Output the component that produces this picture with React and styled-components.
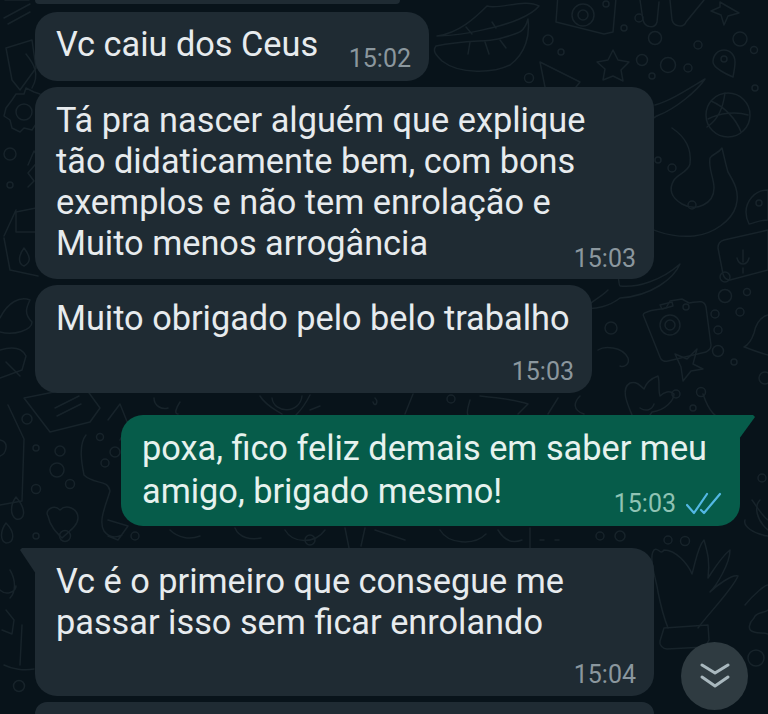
import React from 'react';
import styled, {createGlobalStyle} from 'styled-components';

const GlobalStyle = createGlobalStyle`
  html, body {
    margin: 0;
    padding: 0;
    background: #08131a;
  }
`

const Screen = styled.div`
  position: relative;
  width: 768px;
  height: 714px;
  overflow: hidden;
  background: #08131a;
  font-family: Roboto, "Liberation Sans", sans-serif;
`

const WallpaperSvg = styled.svg`
  position: absolute;
  top: 0;
  left: 0;
  fill: none;
  stroke: #17232a;
  stroke-width: 1.5;
  stroke-linecap: round;
  stroke-linejoin: round;
`

const MessageList = styled.div`
  position: relative;
  display: flex;
  flex-direction: column;
  height: 714px;
  padding: 0 13px 0 35px;
  box-sizing: border-box;
`

const Bubble = styled.div`
  position: relative;
  flex: none;
  box-sizing: border-box;
  width: ${props => props.$width}px;
  height: ${props => props.$height}px;
  margin-top: ${props => props.$gap}px;
  margin-left: ${props => props.$indent || 0}px;
  padding: ${props => props.$top}px 18px 0 22px;
  background: ${props => props.$out ? '#065c4a' : '#1f2b33'};
  border-radius: 22px;
  ${props => props.$out && 'border-top-right-radius: 0;'}
  ${props => props.$tail && 'border-top-left-radius: 0;'}
  ${props => props.$sliver && 'border-top-left-radius: 0; border-top-right-radius: 0;'}
  ${props => props.$cut && 'border-bottom-left-radius: 0; border-bottom-right-radius: 0;'}
`

const TailOut = styled.span`
  position: absolute;
  top: 0;
  right: -15px;
  width: 16px;
  height: 24px;
  background: #065c4a;
  clip-path: polygon(0 0, 88% 0, 100% 8%, 0 100%);
`

const TailIn = styled.span`
  position: absolute;
  top: 0;
  left: -15px;
  width: 16px;
  height: 26px;
  background: #1f2b33;
  clip-path: polygon(100% 0, 12% 0, 0 8%, 100% 100%);
`

const Lines = styled.div`
  margin-left: -1px;
  color: ${props => props.$out ? '#e6f2ee' : '#e7ebee'};
  font-size: 34.3px;
  line-height: ${props => props.$lineHeight || 41}px;
  white-space: nowrap;
`

const InlineRow = styled.div`
  display: flex;
  align-items: flex-start;
  justify-content: space-between;
`

const Meta = styled.div`
  display: flex;
  align-items: center;
  justify-content: flex-end;
  gap: 10px;
  margin-top: ${props => props.$offset || 0}px;
  color: ${props => props.$out ? '#90c3b4' : '#8b979e'};
  font-size: 25px;
  line-height: 30px;
  white-space: nowrap;
`

const ScrollButton = styled.div`
  position: absolute;
  left: 681px;
  top: 642px;
  width: 67px;
  height: 68px;
  border-radius: 50%;
  background: #2f3b41;
  display: flex;
  align-items: center;
  justify-content: center;
`

const Wallpaper = () => (
    <WallpaperSvg width="768" height="714" viewBox="0 0 768 714">
        {/* top right dots */}
        <circle cx="655" cy="38" r="6.5"/><circle cx="642" cy="60" r="5.5"/><circle cx="668" cy="65" r="7.5"/>
        <circle cx="688" cy="68" r="4"/><circle cx="652" cy="76" r="3"/><circle cx="698" cy="45" r="4"/>
        <circle cx="740" cy="39" r="7"/><circle cx="754" cy="50" r="3.5"/><circle cx="755" cy="88" r="3"/>
        <circle cx="548" cy="40" r="5"/><circle cx="561" cy="52" r="3"/><circle cx="529" cy="78" r="4.5"/>
        <circle cx="639" cy="18" r="4"/><circle cx="624" cy="28" r="3"/>
        {/* pin */}
        <path d="M713 62c0-7 5-12 11-12s11 5 11 12c0 4-1 10-2 15-5-2-20-9-20-15z"/><circle cx="724" cy="59" r="3"/>
        {/* star top */}
        <path d="M613 50l5 10 11 2-8 8 2 11-10-5-10 4 2-11-8-7 11-2z"/>
        {/* sparkle top */}
        <path d="M720 2l5 3 14 8-11 3-4 9-3-10-10-4 9-4z"/>
        {/* camera top */}
        <path d="M558 -6l-2 28 48 12 9-2 3-34"/><circle cx="583" cy="15" r="11"/><circle cx="583" cy="15" r="5"/><circle cx="606" cy="4" r="3"/>
        {/* headphone shape */}
        <path d="M640 0l3 20c2 8 12 9 14 2l2-20M670 0l2 20c2 7 12 8 14 2l18-22"/>
        {/* lips */}
        <path d="M437 36c22-3 38-18 50-30 12 4 38-8 52 0 -8 10-30 18-48 22-14 3-24 7-54 8z"/>
        <path d="M436 46c30-6 50-4 62-7 22-6 26-6 30-20 2 16-2 34-18 46-16 8-50 10-68-4-6-6-10-10-6-15z"/>
        <path d="M466 27l6 7M492 22l4 6M470 42l-2 12M485 42l4 12M500 40l6 8"/>
        {/* triangle */}
        <path d="M540 62l40 20 -8 10 -26 0z"/>
        {/* basketball */}
        <circle cx="728" cy="115" r="22"/><path d="M711 101c14 6 25 18 30 31M725 93c-2 14-6 26-18 34M708 119c12-6 28-8 40-4"/>
        {/* snake */}
        <path d="M655 105c15-4 30-14 50-26-8 12-30 30-46 36-8 3-12 10-10 17M672 128c12 8 20 20 18 36-2 8-12 10-16 16-6 10-2 18 8 24 14 8 32 0 32-16 0-10-6-20-4-30 2-4 8-4 12-10 2 8 4 18 6 24 6 10 12 20 8 34-4 14-22 28-42 30-22 2-42-4-62-18"/>
        <path d="M610 256c10 10 8 30 10 30 18 2 42-6 60-22-6 14-28 32-60 34-10 8-26 12-34 10 4-6 14-10 22-18"/>
        <circle cx="658" cy="160" r="3"/><circle cx="672" cy="168" r="4"/><circle cx="692" cy="205" r="4"/>
        {/* pin right, mic card */}
        <path d="M746 212c0-10 8-22 22-22v30c-8 0-14 3-19 4-2-4-3-8-3-12z"/><circle cx="759" cy="203" r="3"/>
        <path d="M724 240l44-10v40l-38 10c-4 0-6-2-7-6l-5-26c0-4 2-7 6-8z"/>
        <path d="M743 250v12M737 258c2 8 10 8 12 0M743 268v5"/>
        {/* camera mid */}
        <path d="M647 312c6-3 12-2 19-4l4-7 12 -2 7 4c8-1 15-4 17 4l5 38c0 4-2 5-5 7l-38 9c-4 1-7-1-8-4l-16-40c-2-3 0-4 3-5z"/>
        <circle cx="670" cy="325" r="10"/><circle cx="670" cy="325" r="5"/><circle cx="686" cy="307" r="3"/><path d="M660 305l12-3 1 4-11 3z"/>
        {/* sparkle mid */}
        <path d="M675 354l12 5 10-10-4 15 10 5-12 2-8 10 -2-14z"/>
        {/* leaf */}
        <path d="M632 415c-4-10-12-26-2-32 6-2 10 2 14 6 2-6 6-10 14-13 2 6 0 14 2 20 4-4 10-6 14-2 0 6-8 16-22 18l-8 12"/>
        <circle cx="676" cy="394" r="4"/><circle cx="701" cy="392" r="4.5"/><circle cx="693" cy="408" r="3"/>
        <circle cx="725" cy="277" r="5"/><circle cx="725" cy="296" r="6.5"/><circle cx="747" cy="292" r="3.5"/>
        <circle cx="715" cy="314" r="4"/><circle cx="740" cy="312" r="4"/><circle cx="718" cy="330" r="4"/><circle cx="718" cy="351" r="5.5"/><circle cx="734" cy="362" r="3"/>
        {/* bell right */}
        <path d="M768 315c-8 2-12 8-14 18-2 6-6 12-10 14 6 2 16 6 24 8"/>
        <circle cx="765" cy="378" r="6"/>
        {/* person */}
        <circle cx="611" cy="328" r="6"/><path d="M598 350c6-4 24-4 30 8 2 6-4 10-8 8"/>
        {/* hand */}
        <path d="M668 628c-4-10-8-26-10-36-2-14-10-34-4-42 4-4 6 6 10 0 12 0 24 14 28 24 4-14 6-28 12-34 4 14 6 22 4 38 8-12 14-22 22-28 0 14-14 36-20 42 6-6 22-18 28-16-6 14-30 38-40 52"/>
        <path d="M664 628l44-3 1 15-4 7-38 2c-4 0-8-4-7-8z"/>
        <path d="M745 605c10-12 20-20 23-20M768 610c-6 4-12 2-14 8-4 4-8 12 0 14 6 2 8 0 14 2"/>
        <circle cx="756" cy="658" r="8"/>
        <circle cx="668" cy="540" r="4"/><circle cx="685" cy="541" r="4.5"/>
        <path d="M760 500c-6 6-4 20 8 30"/><circle cx="762" cy="478" r="4"/>
        <path d="M654 404c-2 6-8 8-14 4M703 394c6 18 14 26 20 22"/>
        {/* left column */}
        <path d="M5 0l24 0M4 18l26-14M8 24l22-12"/>
        <path d="M6 48l26-8 4 28 -16 22-8-10z"/><path d="M26 54c8 10 14 20 6 34"/>
        <path d="M12 100l4-6 8 0 2-6 8 4 6 2 2 8 8 2-2 8-6 2 0 8-6 2-4 6-8-2-4 4-8-4-2-8-6-4 2-8z"/><circle cx="24" cy="112" r="8"/>
        <circle cx="10" cy="154" r="6"/><circle cx="10" cy="185" r="3"/>
        <path d="M28 165l6-14 6 8 -12 14 6 8 -6 6"/>
        <path d="M16 212l20-4 0 24-20 0z M4 236l12-26M4 238l6 32 28 6"/>
        <path d="M24 248c6 8 8 14 0 18-6-2-6-10 0-18z"/>
        <path d="M0 318c8-16 20-22 30-18-4 8-6 14 2 22 0 8-18 14-32 10"/>
        <path d="M0 350c14-4 22-2 26 6l-4 14-22 8M6 362l14 14"/>
        <path d="M24 398l20-4 40 -8 16 22 -10 14 -40 10z"/><path d="M55 408l24-12M57 416l24-12"/>
        <path d="M8 405l16 34 -2 62 -22 4M0 440c10 2 6 14 0 16"/>
        <circle cx="27" cy="419" r="5"/><circle cx="36" cy="448" r="3"/><circle cx="60" cy="451" r="5"/><circle cx="57" cy="470" r="7"/>
        <circle cx="36" cy="489" r="4.5"/><circle cx="70" cy="484" r="4.5"/><circle cx="36" cy="536" r="3"/><circle cx="65" cy="536" r="5.5"/>
        <path d="M16 497c-6 8-6 18 0 22 8 2 12-8-0-22z"/>
        <path d="M6 523c-6 8-6 18 0 20 8 0 10-10 0-20z"/>
        <path d="M48 516c-4-6 6-12 12-6 6-6 18-2 18 8 0 8-10 14-16 20-6-6-12-12-14-22z"/>
        <path d="M86 435c-8 10-4 30-2 40 10 10 24 4 26 16-4 14-12 30-6 40 6 8 14 6 18 4M108 520l20 6-10 14-10-4"/>
        <circle cx="100" cy="437" r="3.5"/><circle cx="115" cy="452" r="5"/><circle cx="105" cy="463" r="4"/>
        <path d="M108 420l12-16 8 20 -8 16"/>
        <path d="M0 590c6 6 16 2 16 -4M10 570c6 10 6 22 0 28"/>
        <path d="M6 610l8 10 -2 14 -10 -4"/><path d="M4 665c8 4 20 6 30 4M22 625l-2 40"/>
        <circle cx="19" cy="686" r="5.5"/>
        {/* strip between bubbles */}
        <path d="M154 398c0 8 8 12 14 10M180 402c-4 6-6 12-2 12M272 398c2 16 28 16 30 -2M260 396c6 10 16 14 22 18M310 395c-6 12-10 16-14 20M375 398c4 4 0 10 -2 4M405 414l8-20 M310 410l10 -4"/>
        <path d="M470 400c-2 8-4 12-2 15M480 396c20 2 36 4 48 8l-10 10M558 398l-10 16M580 396c-6 6-8 14 4 18"/>
        <circle cx="451" cy="399" r="4"/>
        {/* strip below green */}
        <path d="M170 530c8 8 20 10 30 6M235 528c4 10 16 12 26 10M285 530c8 14 30 14 40 0M345 528l4 20M365 528l-4 18M375 530l30 10"/>
        <path d="M440 530c8 14 34 16 46 4M498 530c6 10 14 14 24 10M530 528v20M540 540h4M555 540h4"/>
        <circle cx="310" cy="540" r="5"/><circle cx="135" cy="536" r="4"/>
        <circle cx="600" cy="536" r="4"/><circle cx="620" cy="536" r="5"/>
        {/* right edge above hand */}
        <path d="M745 520c-2 6 8 14 23 16M752 500c6 8 10 16 16 20"/>
    </WallpaperSvg>
)

const DoubleCheck = () => (
    <svg width="36" height="24" viewBox="0 0 36 24" fill="none" stroke="#53b8e4" strokeWidth="2.2" strokeLinecap="round" strokeLinejoin="round">
        <path d="M1 13l7 8L21 2"/>
        <path d="M15 18l3 3L34 2"/>
    </svg>
)

const DoubleChevron = () => (
    <svg width="30" height="26" viewBox="0 0 30 26" fill="none" stroke="#a9b8be" strokeWidth="3" strokeLinecap="round" strokeLinejoin="round">
        <path d="M2 2l13 8 13-8"/>
        <path d="M2 14l13 9 13-9"/>
    </svg>
)

const App = () => (
    <Screen>
        <GlobalStyle/>
        <Wallpaper/>
        <MessageList>
            <Bubble $width={365} $height={4} $gap={0} $sliver/>
            <Bubble $width={394} $height={69} $gap={8} $top={12}>
                <InlineRow>
                    <Lines>Vc caiu dos Ceus</Lines>
                    <Meta $offset={20}>15:02</Meta>
                </InlineRow>
            </Bubble>
            <Bubble $width={619} $height={192} $gap={6} $top={13}>
                <Lines>
                    Tá pra nascer alguém que explique<br/>
                    tão didaticamente bem, com bons<br/>
                    exemplos e não tem enrolação e<br/>
                    Muito menos arrogância
                </Lines>
                <Meta $offset={-20}>15:03</Meta>
            </Bubble>
            <Bubble $width={557} $height={108} $gap={6} $top={13}>
                <Lines>Muito obrigado pelo belo trabalho</Lines>
                <Meta $offset={18}>15:03</Meta>
            </Bubble>
            <Bubble $out $width={619} $height={111} $gap={22} $indent={86} $top={12}>
                <TailOut/>
                <Lines $out $lineHeight={43}>
                    poxa, fico feliz demais em saber meu<br/>
                    amigo, brigado mesmo!
                </Lines>
                <Meta $out $offset={-24}>15:03 <DoubleCheck/></Meta>
            </Bubble>
            <Bubble $tail $width={619} $height={148} $gap={22} $top={13}>
                <TailIn/>
                <Lines>
                    Vc é o primeiro que consegue me<br/>
                    passar isso sem ficar enrolando
                </Lines>
                <Meta $offset={17}>15:04</Meta>
            </Bubble>
            <Bubble $width={619} $height={12} $gap={6} $cut/>
        </MessageList>
        <ScrollButton><DoubleChevron/></ScrollButton>
    </Screen>
)

export default App;
